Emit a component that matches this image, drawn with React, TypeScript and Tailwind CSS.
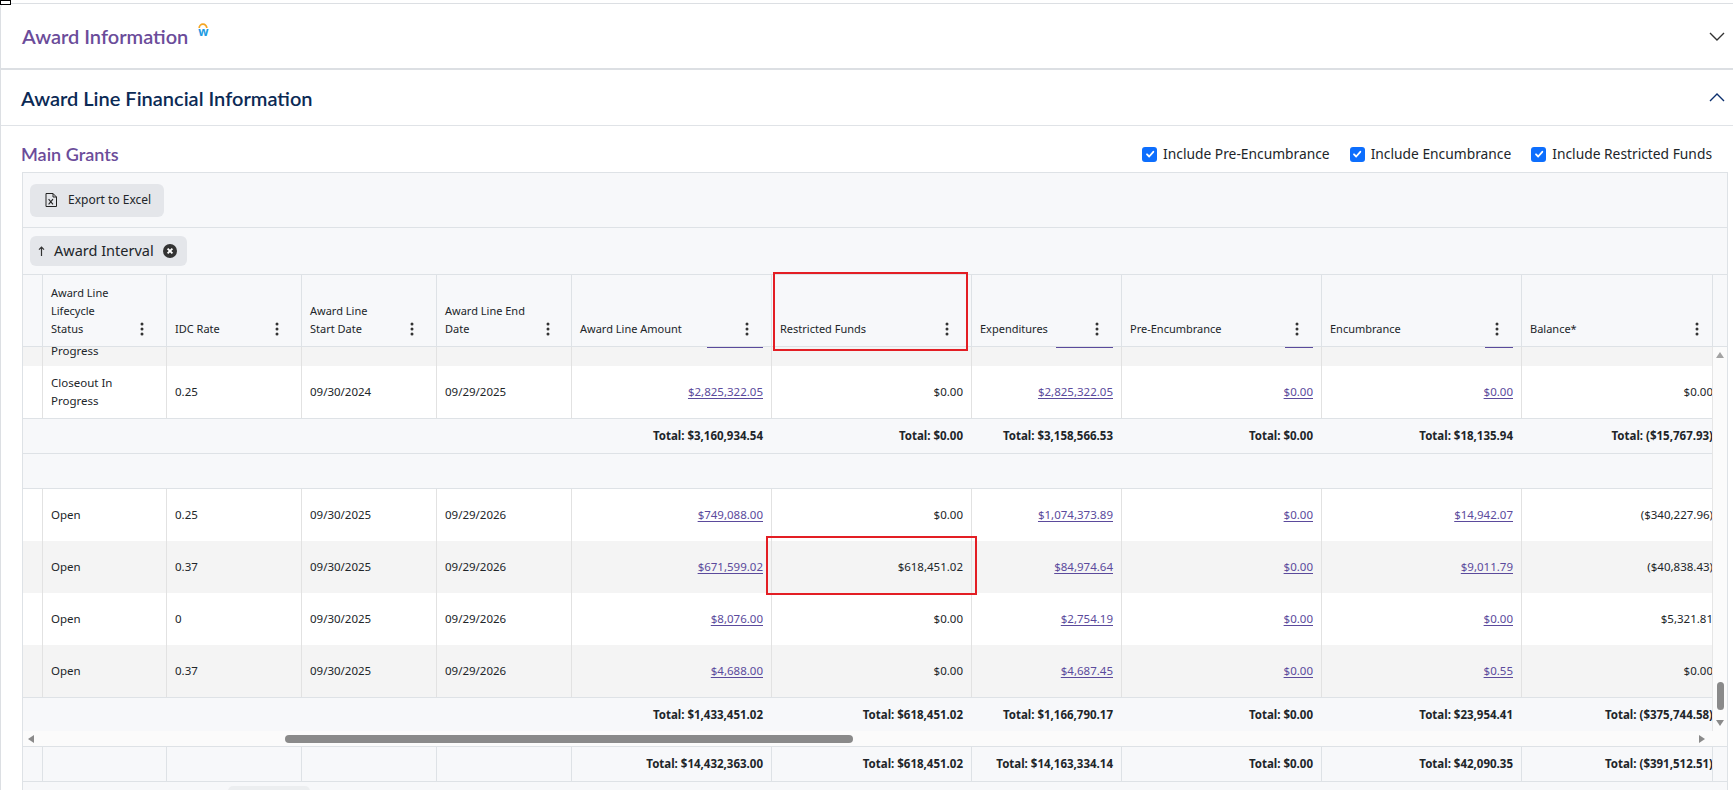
import React from "react";

type Cell = { v: string; link?: boolean };
type Col = { w: string; label: string[]; num?: boolean };
type Row = { status: string[]; cells: Cell[]; striped?: boolean };

const cols: Col[] = [
  { w: "w-[124px]", label: ["Award Line", "Lifecycle", "Status"] },
  { w: "w-[135px]", label: ["IDC Rate"] },
  { w: "w-[135px]", label: ["Award Line", "Start Date"] },
  { w: "w-[135px]", label: ["Award Line End", "Date"] },
  { w: "w-[200px]", label: ["Award Line Amount"], num: true },
  { w: "w-[200px]", label: ["Restricted Funds"], num: true },
  { w: "w-[150px]", label: ["Expenditures"], num: true },
  { w: "w-[200px]", label: ["Pre-Encumbrance"], num: true },
  { w: "w-[200px]", label: ["Encumbrance"], num: true },
  { w: "w-[200px]", label: ["Balance*"], num: true },
];

const L = (v: string): Cell => ({ v, link: true });
const T = (v: string): Cell => ({ v });

// underline widths of the link cells of the row that is scrolled almost out of view
const peekUnderlines: (string | null)[] = [null, null, null, "w-[56px]", null, "w-[57px]", "w-[28px]", "w-[28px]", null];

const firstGroup: Row[] = [
  {
    status: ["Closeout In", "Progress"],
    cells: [T("0.25"), T("09/30/2024"), T("09/29/2025"), L("$2,825,322.05"), T("$0.00"), L("$2,825,322.05"), L("$0.00"), L("$0.00"), T("$0.00")],
  },
];

const secondGroup: Row[] = [
  {
    status: ["Open"],
    cells: [T("0.25"), T("09/30/2025"), T("09/29/2026"), L("$749,088.00"), T("$0.00"), L("$1,074,373.89"), L("$0.00"), L("$14,942.07"), T("($340,227.96)")],
  },
  {
    status: ["Open"],
    striped: true,
    cells: [T("0.37"), T("09/30/2025"), T("09/29/2026"), L("$671,599.02"), T("$618,451.02"), L("$84,974.64"), L("$0.00"), L("$9,011.79"), T("($40,838.43)")],
  },
  {
    status: ["Open"],
    cells: [T("0"), T("09/30/2025"), T("09/29/2026"), L("$8,076.00"), T("$0.00"), L("$2,754.19"), L("$0.00"), L("$0.00"), T("$5,321.81")],
  },
  {
    status: ["Open"],
    striped: true,
    cells: [T("0.37"), T("09/30/2025"), T("09/29/2026"), L("$4,688.00"), T("$0.00"), L("$4,687.45"), L("$0.00"), L("$0.55"), T("$0.00")],
  },
];

const firstTotals = ["$3,160,934.54", "$0.00", "$3,158,566.53", "$0.00", "$18,135.94", "($15,767.93)"];
const secondTotals = ["$1,433,451.02", "$618,451.02", "$1,166,790.17", "$0.00", "$23,954.41", "($375,744.58)"];
const grandTotals = ["$14,432,363.00", "$618,451.02", "$14,163,334.14", "$0.00", "$42,090.35", "($391,512.51)"];

function Kebab() {
  return (
    <svg width="4" height="14" viewBox="0 0 4 14">
      <circle cx="2" cy="2" r="1.5" fill="#333" />
      <circle cx="2" cy="7" r="1.5" fill="#333" />
      <circle cx="2" cy="12" r="1.5" fill="#333" />
    </svg>
  );
}

function Check() {
  return (
    <span className="flex h-[15px] w-[15px] items-center justify-center rounded-[3px] bg-[#0d6efd]">
      <svg width="10" height="10" viewBox="0 0 10 10">
        <polyline points="2,5.3 4.2,7.5 8.3,2.8" fill="none" stroke="#fff" strokeWidth="1.8" strokeLinecap="round" strokeLinejoin="round" />
      </svg>
    </span>
  );
}

function ExcelIcon() {
  return (
    <svg width="12" height="14" viewBox="0 0 12 14">
      <path d="M1 0.5h7l3.5 3.5v9.5H1z" fill="none" stroke="#222" strokeWidth="1" />
      <path d="M8 0.5v3.5h3.5" fill="none" stroke="#222" strokeWidth="1" />
      <path d="M3.6 6.2l4.4 5.2M8 6.2l-4.4 5.2" stroke="#222" strokeWidth="1.1" />
    </svg>
  );
}

function HeaderRow() {
  return (
    <div className="flex h-[72px] border-b border-[#dee2e6]">
      <div className="flex-1 overflow-hidden">
        <div className="flex h-full w-[1699px]">
          <div className="w-[20px] shrink-0 border-r border-[#dee2e6]" />
          {cols.map((c) => (
            <div key={c.label.join(" ")} className={`${c.w} flex shrink-0 items-end border-r border-[#dee2e6] pb-2 pl-2`}>
              <div className="flex-1 whitespace-nowrap text-[11px] leading-[18px]">
                {c.label.map((l) => (
                  <div key={l}>{l}</div>
                ))}
              </div>
              <div className="flex h-[18px] w-[48px] items-center justify-center">
                <Kebab />
              </div>
            </div>
          ))}
        </div>
      </div>
      <div className="w-[15px] border-l border-[#dee2e6]" />
    </div>
  );
}

// bottom of a row that has scrolled up under the header
function PeekRow() {
  return (
    <div className="flex h-[19px] bg-[#f4f4f4]">
      <div className="w-[20px] shrink-0 border-r border-[#e2e2e2]" />
      <div className={`${cols[0].w} shrink-0 border-r border-[#e2e2e2] px-2 text-[11.5px] leading-[12px]`}>
        <div className="-mt-[2px]">Progress</div>
      </div>
      {peekUnderlines.map((u, i) => (
        <div key={i} className={`${cols[i + 1].w} flex shrink-0 justify-end border-r border-[#e2e2e2] px-2`}>
          {u && <span className={`${u} h-[1px] bg-[#5b4a9c]`} />}
        </div>
      ))}
    </div>
  );
}

function DataRow({ row }: { row: Row }) {
  return (
    <div className={`flex h-[52px] ${row.striped ? "bg-[#f4f4f4]" : "bg-white"}`}>
      <div className="w-[20px] shrink-0 border-r border-[#e2e2e2]" />
      <div className={`${cols[0].w} flex shrink-0 flex-col justify-center border-r border-[#e2e2e2] px-2 text-[11.5px] leading-[18px]`}>
        {row.status.map((s) => (
          <div key={s}>{s}</div>
        ))}
      </div>
      {row.cells.map((cell, i) => {
        const c = cols[i + 1];
        return (
          <div
            key={i}
            className={`${c.w} flex shrink-0 items-center border-r border-[#e2e2e2] px-2 text-[11.5px] leading-[18px] ${c.num ? "justify-end" : ""}`}
          >
            {cell.link ? (
              <span className="text-[#5b4a9c] underline decoration-[#5b4a9c] underline-offset-2">{cell.v}</span>
            ) : (
              <span>{cell.v}</span>
            )}
          </div>
        );
      })}
    </div>
  );
}

function TotalCells({ values, divided }: { values: string[]; divided?: boolean }) {
  const border = divided ? "border-[#dee2e6]" : "border-transparent";
  return (
    <div className="flex h-full w-[1699px]">
      <div className={`w-[20px] shrink-0 border-r ${border}`} />
      {cols.map((c, i) => (
        <div key={i} className={`${c.w} flex shrink-0 items-center justify-end border-r ${border} px-2 text-[11.5px] font-bold`}>
          {i >= 4 ? `Total: ${values[i - 4]}` : ""}
        </div>
      ))}
    </div>
  );
}

function GroupTotal({ values }: { values: string[] }) {
  return (
    <div className="h-[35px] border-t border-[#dee2e6] bg-[#f7f8fa]">
      <TotalCells values={values} />
    </div>
  );
}

function Grid() {
  return (
    <div className="ml-[21px] mr-[5px] border border-[#dee2e6] bg-[#f7f8fa]">
      <div className="flex h-[55px] items-center border-b border-[#dee2e6] pl-[7px]">
        <button className="flex h-[33px] items-center gap-[11px] rounded-[6px] bg-[#e4e6ea] pl-[15px] pr-[13px] text-[12px] text-[#212529]">
          <ExcelIcon />
          Export to Excel
        </button>
      </div>
      <div className="flex h-[47px] items-center border-b border-[#dee2e6] pl-[7px]">
        <div className="flex h-[30px] items-center rounded-[6px] bg-[#e4e6ea] pl-[8px] pr-[10px]">
          <svg width="7" height="10" viewBox="0 0 7 10">
            <path d="M3.5 10V1M1 3.6L3.5 1L6 3.6" fill="none" stroke="#333" strokeWidth="1.2" />
          </svg>
          <span className="ml-[9px] text-[14.5px]">Award Interval</span>
          <svg width="14" height="14" viewBox="0 0 14 14" className="ml-[9px]">
            <circle cx="7" cy="7" r="7" fill="#333" />
            <path d="M4.6 4.6l4.8 4.8M9.4 4.6l-4.8 4.8" stroke="#fff" strokeWidth="1.9" />
          </svg>
        </div>
      </div>
      <HeaderRow />
      <div className="flex h-[384px]">
        <div className="flex-1 overflow-hidden bg-white">
          <div className="w-[1699px]">
            <PeekRow />
            {firstGroup.map((r, i) => (
              <DataRow key={`a${i}`} row={r} />
            ))}
            <GroupTotal values={firstTotals} />
            <div className="h-[36px] border-y border-[#dee2e6] bg-[#f7f8fa]" />
            {secondGroup.map((r, i) => (
              <DataRow key={`b${i}`} row={r} />
            ))}
            <GroupTotal values={secondTotals} />
          </div>
        </div>
        <div className="flex w-[15px] flex-col items-center border-l border-[#e6e6e6] bg-[#fbfbfb]">
          <svg width="8" height="6" viewBox="0 0 8 6" className="mt-[5px]">
            <path d="M0 6L4 0L8 6z" fill="#a3a3a3" />
          </svg>
          <div className="mt-auto h-[28px] w-[7px] rounded-full bg-[#8a8a8a]" />
          <svg width="8" height="6" viewBox="0 0 8 6" className="mb-[5px] mt-[10px]">
            <path d="M0 0L8 0L4 6z" fill="#8a8a8a" />
          </svg>
        </div>
      </div>
      <div className="flex h-[15px] bg-[#fbfbfb]">
        <div className="flex flex-1 items-center">
          <svg width="6" height="8" viewBox="0 0 6 8" className="ml-[5px]">
            <path d="M6 0L0 4L6 8z" fill="#8a8a8a" />
          </svg>
          <div className="ml-[251px] h-[8px] w-[568px] rounded-full bg-[#8a8a8a]" />
          <svg width="6" height="8" viewBox="0 0 6 8" className="ml-auto mr-[7px]">
            <path d="M0 0L6 4L0 8z" fill="#8a8a8a" />
          </svg>
        </div>
        <div className="w-[15px]" />
      </div>
      <div className="flex h-[36px] border-y border-[#dee2e6]">
        <div className="flex-1 overflow-hidden">
          <TotalCells values={grandTotals} divided />
        </div>
        <div className="w-[15px] border-l border-[#dee2e6]" />
      </div>
      <div className="h-[20px] pt-[4px]">
        <div className="ml-[205px] h-[10px] w-[82px] rounded-full bg-[#eceef0]" />
      </div>
    </div>
  );
}

export default function App() {
  return (
    <div className="relative h-[790px] w-[1733px] overflow-hidden bg-white font-['Noto_Sans',sans-serif] text-[#212529]">
      <div className="pt-[3px]">
        <div className="flex h-[67px] items-center justify-between rounded-tl-[5px] border-b-2 border-l border-t border-[#dcdfe3] pl-[21px] pr-[8px]">
          <div className="flex items-center">
            <span className="font-['Lato',sans-serif] text-[20px] font-semibold text-[#6b4c9a]">Award Information</span>
            <span className="mb-[13px] ml-[10px] flex flex-col items-center">
              <svg width="10" height="6" viewBox="0 0 10 6">
                <path d="M1.2 6A3.8 3.8 0 0 1 8.8 6" fill="none" stroke="#f5a623" strokeWidth="1.7" />
              </svg>
              <span className="-mt-[2px] text-[12px] font-bold leading-none text-[#1c9be2]">w</span>
            </span>
          </div>
          <svg width="16" height="9" viewBox="0 0 16 9">
            <polyline points="1,1 8,8 15,1" fill="none" stroke="#333" strokeWidth="1.4" />
          </svg>
        </div>
        <div className="border-l border-[#dcdfe3]">
          <div className="flex h-[56px] items-center justify-between border-b border-[#e0e3e7] pl-[20px] pr-[8px]">
            <span className="font-['Lato',sans-serif] text-[20px] font-semibold text-[#0b2a55]">Award Line Financial Information</span>
            <svg width="16" height="9" viewBox="0 0 16 9">
              <polyline points="1,8 8,1 15,8" fill="none" stroke="#0b2f6e" strokeWidth="1.4" />
            </svg>
          </div>
          <div className="mt-[16px] flex h-[24px] items-center justify-between pl-[20px] pr-[21px]">
            <span className="font-['Lato',sans-serif] text-[18px] font-semibold text-[#6b4c9a]">Main Grants</span>
            <div className="flex items-center gap-[20px] text-[13.8px]">
              {["Include Pre-Encumbrance", "Include Encumbrance", "Include Restricted Funds"].map((t) => (
                <label key={t} className="flex items-center gap-[6px]">
                  <Check />
                  <span>{t}</span>
                </label>
              ))}
            </div>
          </div>
          <div className="mt-[6px]">
            <Grid />
          </div>
        </div>
      </div>

      <div className="absolute left-0 top-0 h-[5px] w-[11px] border border-black bg-white" />
      <div className="absolute left-[773px] top-[272px] h-[79px] w-[195px] border-2 border-[#e31e24]" />
      <div className="absolute left-[766px] top-[536px] h-[59px] w-[211px] border-2 border-[#e31e24]" />
    </div>
  );
}
